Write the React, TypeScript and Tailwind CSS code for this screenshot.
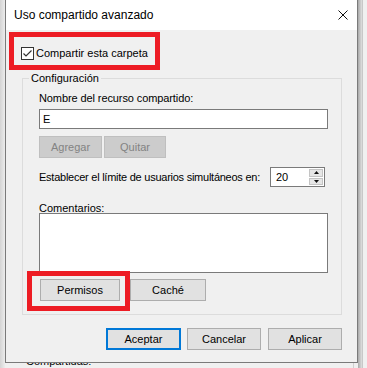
import React from 'react';

const font = { fontFamily: '"Liberation Sans", Arial, sans-serif' };

function Btn({ label, w, disabled, primary, className = '' }: { label: string; w: string; disabled?: boolean; primary?: boolean; className?: string }) {
  const base = 'h-[22px] flex items-center justify-center text-[11px] leading-none';
  const look = disabled
    ? 'bg-[#cccccc] border border-[#bfbfbf] text-[#838383]'
    : primary
    ? 'bg-[#e1e1e1] border-2 border-[#0078d7] text-black'
    : 'bg-[#e1e1e1] border border-[#adadad] text-black';
  return <div className={`${base} ${look} ${w} ${className}`}>{label}</div>;
}

export default function App() {
  return (
    <div className="relative w-[367px] h-[368px] overflow-hidden bg-[#f0f0f0] text-black" style={font}>
      {/* parent window behind the dialog */}
      <div className="absolute left-0 top-0 w-[5px] h-full bg-gradient-to-r from-[#d4d4d4] to-[#ececec]" />
      <div className="absolute left-[358px] top-0 w-[4px] h-full bg-gradient-to-r from-[#a9a9a9] to-[#e0e0e0]" />
      <div className="absolute left-[362px] top-0 w-px h-full bg-[#c8c8c8]" />
      <div className="absolute left-[26px] top-[355px] text-[11px] leading-[13px]">Compartidas:</div>
      <div className="absolute left-[353px] top-[362px] w-px h-[6px] bg-[#d0d0d0]" />

      {/* dialog */}
      <div className="absolute left-[5px] top-0 w-[353px] h-[363px] border-x border-b border-[#7a7a7a] bg-[#f0f0f0] flex flex-col">
        <div className="h-[30px] bg-white flex items-center justify-between pl-[8px] pr-[9px] shrink-0">
          <span className="text-[12px] leading-none">Uso compartido avanzado</span>
          <svg width="10" height="10" viewBox="0 0 10 10" className="block">
            <path d="M0.5 0.5 L9.5 9.5 M9.5 0.5 L0.5 9.5" stroke="#111" strokeWidth="1" fill="none" />
          </svg>
        </div>

        <div className="flex items-center pl-[15px] mt-[17px] h-[13px]">
          <div className="w-[13px] h-[13px] border border-[#333333] bg-white flex items-center justify-center">
            <svg width="11" height="11" viewBox="0 0 11 11">
              <path d="M1.5 5.5 L4 8 L9.5 2.5" stroke="#333" strokeWidth="1.2" fill="none" />
            </svg>
          </div>
          <span className="ml-[2px] text-[11px] leading-none">Compartir esta carpeta</span>
        </div>

        <div className="relative ml-[16px] mt-[18px] w-[320px] h-[237px] border border-[#dcdcdc] pl-[16px] flex flex-col">
          <span className="absolute -top-[7px] left-[6px] px-[2px] bg-[#f0f0f0] text-[11px] leading-[13px]">Configuración</span>

          <div className="mt-[13px] text-[11px] leading-[13px] tracking-[-0.1px]">Nombre del recurso compartido:</div>
          <div className="mt-[4px] w-[289px] h-[20px] border border-[#7a7a7a] bg-white flex items-center pl-[3px] text-[11px] leading-none">E</div>

          <div className="mt-[7px] flex gap-[2px]">
            <Btn label="Agregar" w="w-[63px]" disabled />
            <Btn label="Quitar" w="w-[62px]" disabled />
          </div>

          <div className="mt-[9px] w-[289px] h-[20px] flex items-center justify-between pr-[3px]">
            <span className="text-[11px] leading-none whitespace-nowrap tracking-[-0.25px]">Establecer el límite de usuarios simultáneos en:</span>
            <div className="w-[55px] h-[20px] shrink-0 border border-[#7a7a7a] bg-white flex">
              <span className="flex-1 flex items-center pl-[5px] text-[11px] leading-none">20</span>
              <div className="w-[15px] flex flex-col gap-px py-px pr-px">
                <div className="flex-1 bg-[#e6e6e6] border border-[#c4c4c4] flex items-center justify-center">
                  <svg width="5" height="3" viewBox="0 0 5 3"><path d="M2.5 0 L5 3 L0 3 Z" fill="#111" /></svg>
                </div>
                <div className="flex-1 bg-[#e6e6e6] border border-[#c4c4c4] flex items-center justify-center">
                  <svg width="5" height="3" viewBox="0 0 5 3"><path d="M0 0 L5 0 L2.5 3 Z" fill="#111" /></svg>
                </div>
              </div>
            </div>
          </div>

          <div className="mt-[15px] h-[12px] text-[11px] leading-[12px]">Comentarios:</div>
          <div className="mt-[-1px] w-[289px] h-[60px] border border-[#7a7a7a] bg-white" />

          <div className="mt-[6px] ml-px flex gap-[10px]">
            <Btn label="Permisos" w="w-[80px]" />
            <Btn label="Caché" w="w-[76px]" />
          </div>
        </div>

        <div className="mt-[13px] flex pl-[100px]">
          <Btn label="Aceptar" w="w-[75px]" primary />
          <Btn label="Cancelar" w="w-[74px]" className="ml-[6px]" />
          <Btn label="Aplicar" w="w-[74px]" className="ml-[7px]" />
        </div>
      </div>

      {/* red annotation boxes */}
      <div className="absolute left-[9px] top-[32px] w-[151px] h-[38px] border-[5px] border-[#ed1c24]" />
      <div className="absolute left-[27px] top-[271px] w-[103px] h-[40px] border-[5px] border-[#ed1c24]" />
    </div>
  );
}
